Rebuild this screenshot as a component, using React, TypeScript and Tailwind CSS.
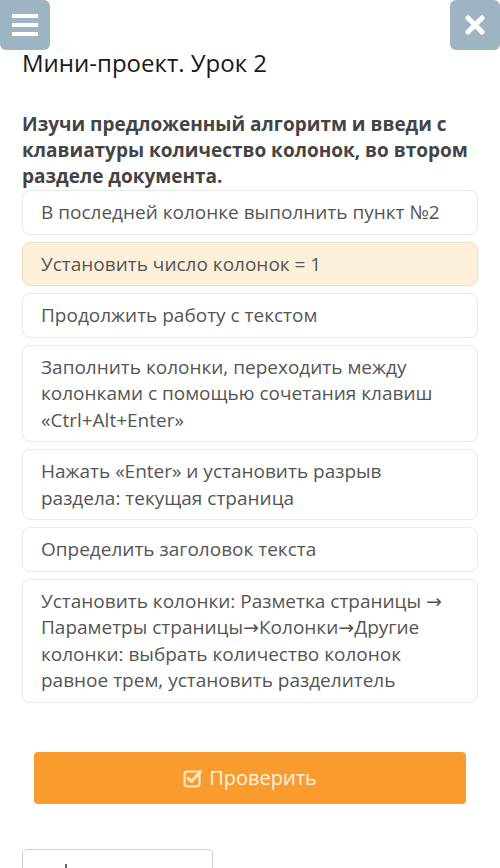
import React from "react";

const items: { t: string; hl?: boolean }[] = [
  { t: "В последней колонке выполнить пункт №2" },
  { t: "Установить число колонок = 1", hl: true },
  { t: "Продолжить работу с текстом" },
  { t: "Заполнить колонки, переходить между колонками с помощью сочетания клавиш «Ctrl+Alt+Enter»" },
  { t: "Нажать «Enter» и установить разрыв раздела: текущая страница" },
  { t: "Определить заголовок текста" },
  { t: "Установить колонки: Разметка страницы → Параметры страницы→Колонки→Другие колонки: выбрать количество колонок равное трем, установить разделитель" },
];

export default function App() {
  return (
    <div className="w-[500px] h-[868px] overflow-hidden bg-white relative" style={{ fontFamily: '"Open Sans", "Noto Sans", sans-serif' }}>
      <div className="flex justify-between">
        <div className="w-[50px] h-[50px] bg-[#9fb4c3] rounded-br-[6px] rounded-tr-[6px] rounded-bl-[6px] flex flex-col items-center justify-center gap-[5px]">
          <div className="w-[26px] h-[4px] bg-white" />
          <div className="w-[26px] h-[4px] bg-white" />
          <div className="w-[26px] h-[4px] bg-white" />
        </div>
        <div className="w-[50px] h-[50px] bg-[#9fb4c3] rounded-[6px] flex items-center justify-center">
          <svg width="20" height="20" viewBox="0 0 20 20">
            <path d="M3 3 L17 17 M17 3 L3 17" stroke="white" strokeWidth="5" strokeLinecap="round" />
          </svg>
        </div>
      </div>
      <div className="px-[22px]">
        <div className="text-[24px] leading-[30px] text-[#1a1a1a] -mt-[2px]">Мини-проект. Урок 2</div>
        <div className="mt-[33px] text-[19px] leading-[26px] font-bold text-[#444]">
          Изучи предложенный алгоритм и введи с клавиатуры количество колонок, во втором разделе документа.
        </div>
        <div className="mt-[1px] flex flex-col gap-[7px]">
          {items.map((it, i) => (
            <div
              key={i}
              style={{ fontFamily: '"Open Sans", "DejaVu Sans", sans-serif' }}
              className={
                it.hl
                  ? "rounded-[8px] border border-[#f0dfba] bg-[#fcf0da] px-[18px] py-[8px] text-[19px] leading-[26.5px] text-[#555]"
                  : "rounded-[8px] border border-[#e9e9e9] bg-white px-[18px] py-[8px] text-[19px] leading-[26.5px] text-[#555]"
              }
            >
              {it.t}
            </div>
          ))}
        </div>
        <div className="mt-[49px] mx-[12px] h-[52px] rounded-[4px] bg-[#fa9c2d] flex items-center justify-center gap-[6px] text-white text-[20px]">
          <svg width="20" height="20" viewBox="0 0 20 20" fill="none">
            <rect x="1.5" y="3.5" width="15" height="15" rx="3" stroke="#fde7c8" strokeWidth="2.2" />
            <path d="M5 10 L8.5 13.5 L17.5 3.5" stroke="#fde7c8" strokeWidth="3" strokeLinecap="round" strokeLinejoin="round" />
          </svg>
          <span className="text-[#fff3e3]">Проверить</span>
        </div>
        <div className="mt-[45px] w-[191px] h-[40px] rounded-[5px] border border-[#cfcfcf] relative">
          <div className="absolute left-[42px] top-[14px] w-[2px] h-[4px] bg-[#666]" />
        </div>
      </div>
    </div>
  );
}
